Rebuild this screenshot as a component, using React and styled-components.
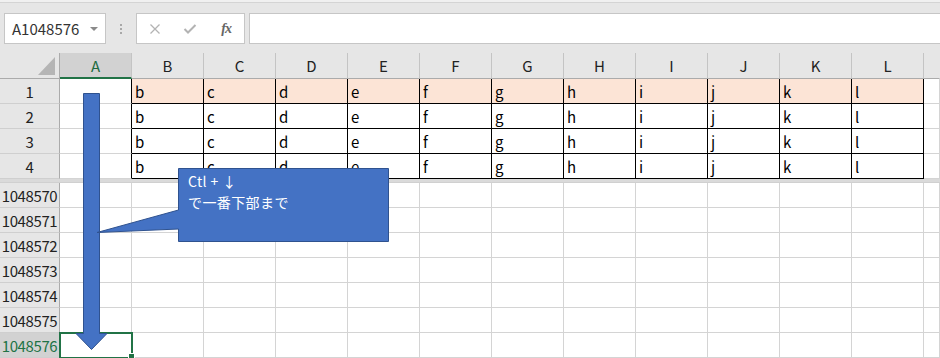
import React from "react";
import styled, { createGlobalStyle } from "styled-components";

const GlobalStyle = createGlobalStyle`
  html, body {
    margin: 0;
    padding: 0;
    background: #ffffff;
  }
  body {
    font-family: "Noto Sans CJK JP", "Noto Sans", sans-serif;
  }
`;

const COLS = ["A", "B", "C", "D", "E", "F", "G", "H", "I", "J", "K", "L"];
const TEMPLATE = "60px repeat(12, 72px) 1fr";

const Window = styled.div`
  position: relative;
  width: 940px;
  height: 358px;
  overflow: hidden;
  background: #e6e6e6;
  font-family: "Noto Sans CJK JP", "Noto Sans", sans-serif;
  color: #000;
`;

const FormulaBar = styled.div`
  box-sizing: border-box;
  height: 53px;
  padding: 13px 0 9px 4px;
  display: flex;
  align-items: stretch;
  background: linear-gradient(#f0f0f0 0 2px, #d4d4d4 2px 3px, #e6e6e6 3px);
`;

const NameBox = styled.div`
  box-sizing: border-box;
  width: 102px;
  display: flex;
  align-items: center;
  justify-content: space-between;
  padding: 0 7px 0 7px;
  background: #fff;
  border: 1px solid #c6c6c6;
  font-size: 15px;
  color: #333;
`;

const Caret = styled.span`
  width: 0;
  height: 0;
  border-left: 4px solid transparent;
  border-right: 4px solid transparent;
  border-top: 4px solid #8a8a8a;
  margin-top: 1px;
`;

const Grip = styled.div`
  width: 30px;
  display: flex;
  flex-direction: column;
  align-items: center;
  justify-content: center;
  gap: 2px;

  span {
    width: 2px;
    height: 2px;
    background: #a8a8a8;
  }
`;

const FxButtons = styled.div`
  box-sizing: border-box;
  width: 109px;
  display: grid;
  grid-template-columns: repeat(3, 1fr);
  align-items: center;
  justify-items: center;
  background: #fff;
  border: 1px solid #c6c6c6;
`;

const FxLabel = styled.span`
  font-family: "Liberation Serif", serif;
  font-style: italic;
  font-weight: bold;
  font-size: 14px;
  color: #666;
  letter-spacing: -1px;
`;

const FormulaInput = styled.div`
  flex: 1;
  margin-left: 4px;
  margin-right: -2px;
  background: #fff;
  border: 1px solid #c6c6c6;
`;

const Sheet = styled.div`
  display: flex;
  flex-direction: column;
`;

const Row = styled.div`
  display: grid;
  grid-template-columns: ${TEMPLATE};
  height: ${(p) => p.$h || 25}px;
`;

const Corner = styled.div`
  position: relative;
  box-sizing: border-box;
  border-right: 1px solid #ababab;
  border-bottom: 1px solid #ababab;

  &::after {
    content: "";
    position: absolute;
    right: 4px;
    bottom: 3px;
    width: 0;
    height: 0;
    border-left: 17px solid transparent;
    border-bottom: 18px solid #b5b5b5;
  }
`;

const ColHeader = styled.div`
  box-sizing: border-box;
  display: flex;
  align-items: center;
  justify-content: center;
  font-size: 15px;
  background: ${(p) => (p.$active ? "#d2d2d2" : "#e6e6e6")};
  color: ${(p) => (p.$active ? "#1e6b41" : "#222")};
  border-right: 1px solid ${(p) => (p.$last ? "transparent" : "#c4c4c4")};
  border-bottom: ${(p) => (p.$active ? "2px solid #217346" : "1px solid #ababab")};
  padding-top: ${(p) => (p.$active ? "1px" : "0")};
`;

const RowHeader = styled.div`
  box-sizing: border-box;
  display: flex;
  align-items: center;
  justify-content: center;
  font-size: 15px;
  letter-spacing: -0.4px;
  background: ${(p) => (p.$active ? "#d2d2d2" : "#e6e6e6")};
  color: ${(p) => (p.$active ? "#217346" : "#222")};
  border-right: 1px solid #ababab;
  border-bottom: 1px solid #cfcfcf;
`;

const Cell = styled.div`
  position: relative;
  box-sizing: border-box;
  display: flex;
  align-items: center;
  padding: 1px 0 0 3px;
  font-size: 15px;
  background: ${(p) => (p.$fill ? "#fce4d6" : "#ffffff")};
  border-right: 1px solid ${(p) => (p.$boxed || p.$edge ? "#000" : "#d4d4d4")};
  border-bottom: 1px solid ${(p) => (p.$boxed ? "#000" : "#d4d4d4")};
  outline: ${(p) => (p.$selected ? "2px solid #217346" : "none")};
  outline-offset: -1px;
  z-index: ${(p) => (p.$selected ? 1 : 0)};

  &::after {
    content: "";
    display: ${(p) => (p.$selected ? "block" : "none")};
    position: absolute;
    right: -4px;
    bottom: -3px;
    width: 5px;
    height: 5px;
    background: #217346;
    border: 1px solid #fff;
  }
`;

const Split = styled.div`
  height: 4px;
  background: linear-gradient(#dadada 0 3px, #d0d0d0 3px);
`;

const ArrowShape = styled.svg`
  position: absolute;
  left: 75px;
  top: 92px;
  z-index: 2;
`;

const Callout = styled.div`
  position: absolute;
  left: 178px;
  top: 168px;
  width: 211px;
  height: 74px;
  box-sizing: border-box;
  padding: 3px 10px;
  z-index: 2;
  color: #fff;
  font-size: 14px;
  line-height: 21px;
  letter-spacing: 0.4px;
`;

const CalloutShape = styled.svg`
  position: absolute;
  left: -82px;
  top: 0;
`;

const CalloutText = styled.div`
  position: relative;
`;

const tableRows = [1, 2, 3, 4];
const lowerRows = [1048570, 1048571, 1048572, 1048573, 1048574, 1048575, 1048576];

export default function App() {
  return (
    <Window>
      <GlobalStyle />
      <FormulaBar>
        <NameBox>
          A1048576
          <Caret />
        </NameBox>
        <Grip>
          <span />
          <span />
          <span />
        </Grip>
        <FxButtons>
          <svg width="12" height="12" viewBox="0 0 12 12">
            <path d="M1.5 1.5 L10.5 10.5 M10.5 1.5 L1.5 10.5" stroke="#b3b3b3" strokeWidth="1.3" />
          </svg>
          <svg width="14" height="12" viewBox="0 0 14 12">
            <path d="M1.5 6 L5 9.5 L12.5 2" stroke="#b3b3b3" strokeWidth="2" fill="none" />
          </svg>
          <FxLabel>fx</FxLabel>
        </FxButtons>
        <FormulaInput />
      </FormulaBar>

      <Sheet>
        <Row $h={26}>
          <Corner />
          {COLS.map((c) => (
            <ColHeader key={c} $active={c === "A"}>
              {c}
            </ColHeader>
          ))}
          <ColHeader $last />
        </Row>

        {tableRows.map((r) => (
          <Row key={r}>
            <RowHeader>{r}</RowHeader>
            <Cell $edge />
            {COLS.slice(1).map((c) => (
              <Cell key={c} $boxed $fill={r === 1}>
                {c.toLowerCase()}
              </Cell>
            ))}
            <Cell />
          </Row>
        ))}

        <Split />

        {lowerRows.map((r) => (
          <Row key={r}>
            <RowHeader $active={r === 1048576}>{r}</RowHeader>
            <Cell $selected={r === 1048576} />
            {COLS.slice(1).map((c) => (
              <Cell key={c} />
            ))}
            <Cell />
          </Row>
        ))}
      </Sheet>

      <ArrowShape width="34" height="260" viewBox="0 0 34 260">
        <polygon
          points="8.5,1.5 24.5,1.5 24.5,241.5 32,241.5 16.5,257.5 1,241.5 8.5,241.5"
          fill="#4472c4"
          stroke="#2f528f"
          strokeWidth="1"
        />
      </ArrowShape>

      <Callout>
        <CalloutShape width="294" height="75" viewBox="0 0 294 75">
          <path
            d="M82.5 0.5 H292.5 V73.5 H82.5 V61 L1 64.5 L82.5 42 Z"
            fill="#4472c4"
            stroke="#2f528f"
            strokeWidth="1"
          />
        </CalloutShape>
        <CalloutText>Ctl + ↓</CalloutText>
        <CalloutText>で一番下部まで</CalloutText>
      </Callout>
    </Window>
  );
}
